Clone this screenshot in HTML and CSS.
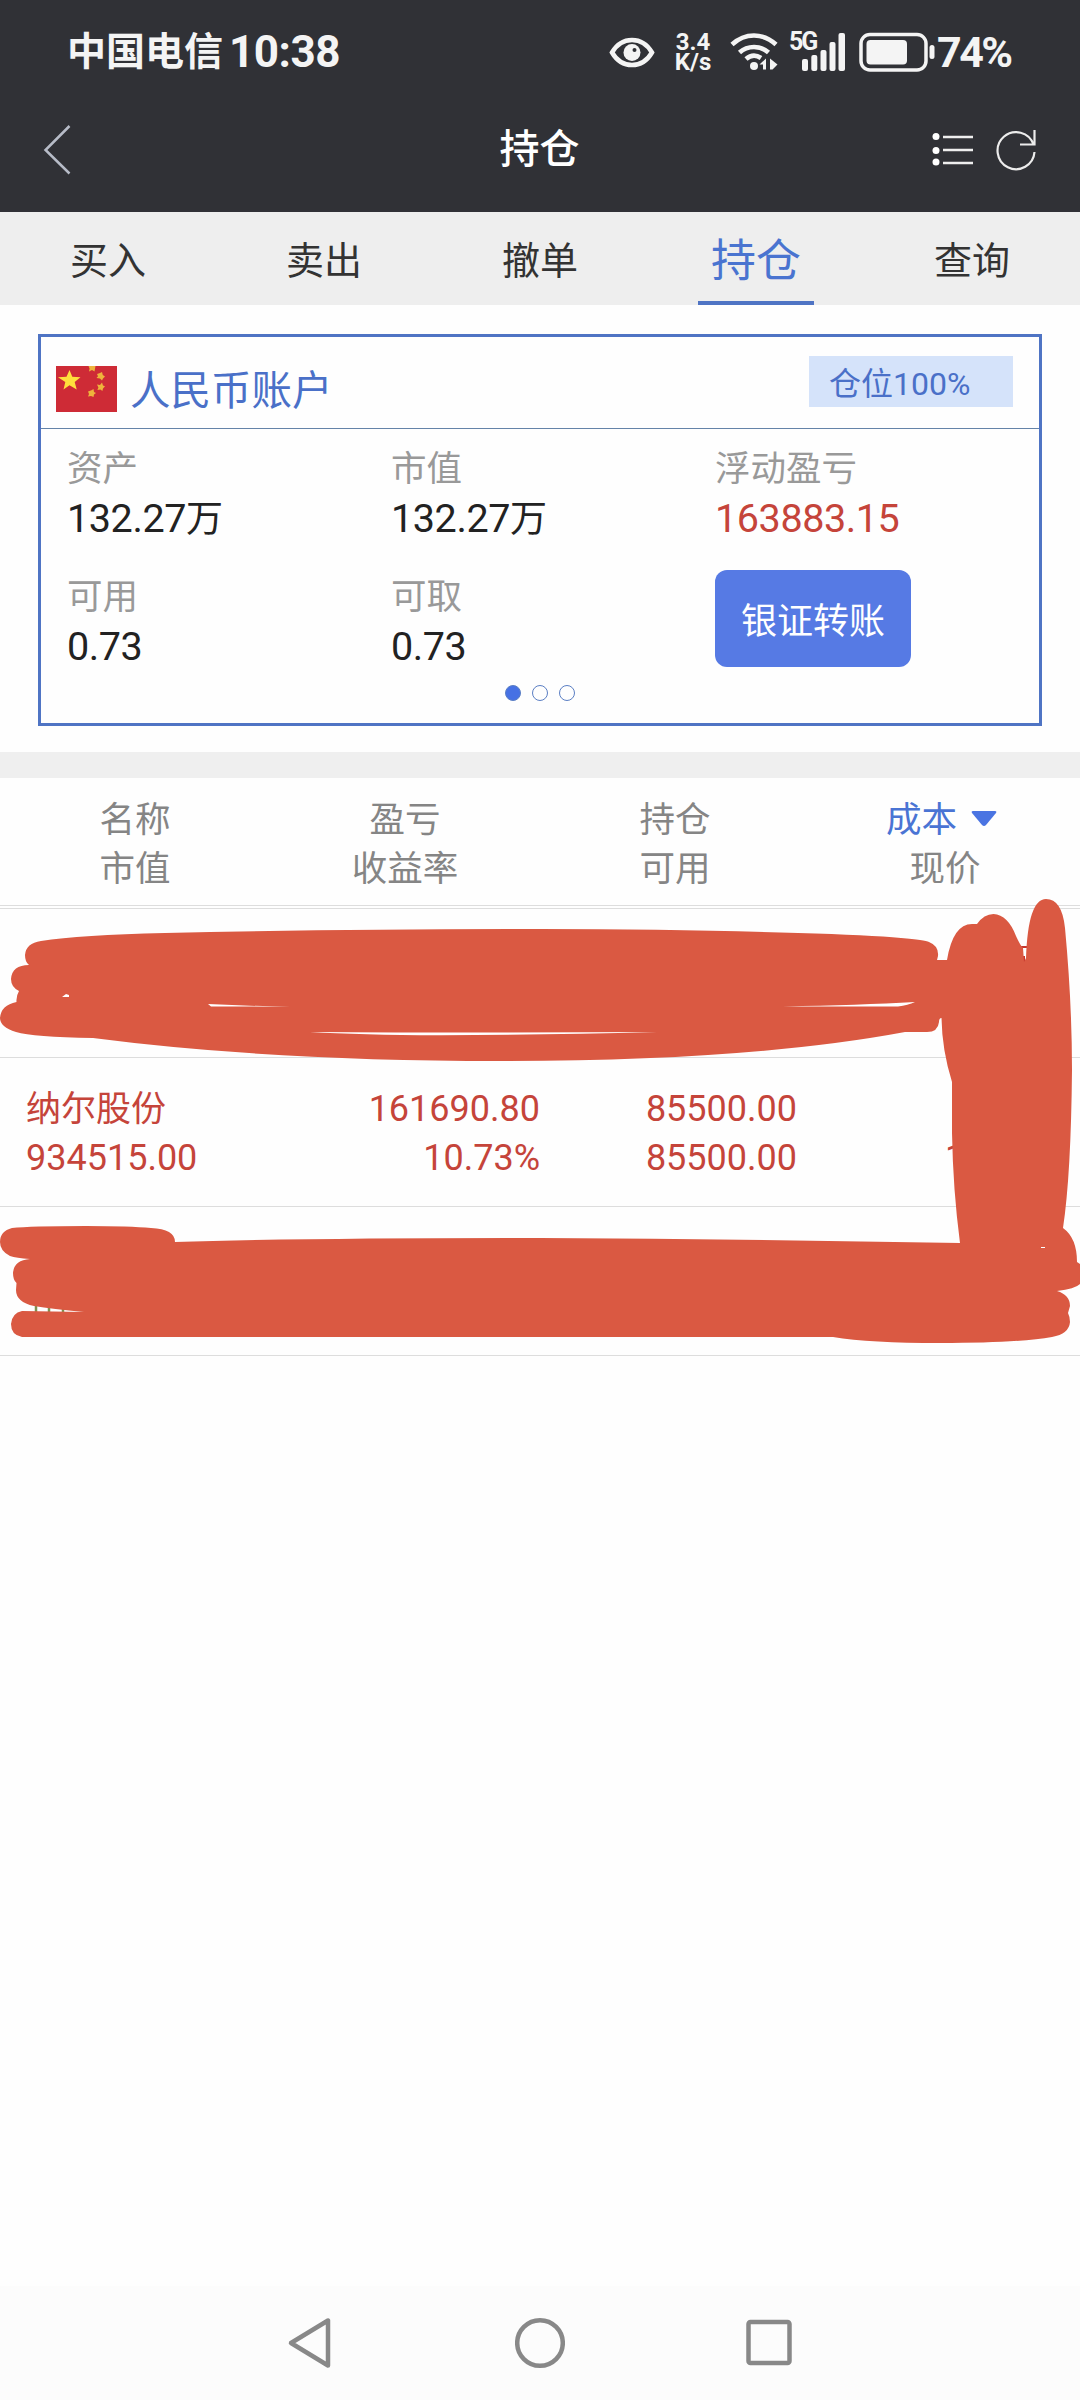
FILE: index.html
```html
<!DOCTYPE html>
<html lang="zh-CN">
<head>
<meta charset="utf-8">
<title>持仓</title>
<link rel="stylesheet" href="styles.css">
</head>
<body>
<header class="top">
  <div class="status">
    <div class="carrier"><span class="operator">中国电信</span><span class="clock">10:38</span></div>
    <div class="indicators">
      <svg class="eye" width="46" height="40" viewBox="0 0 46 40"><path d="M3 20.500C8 12 15 8 23 8s15 4 20 12.500C38 29 31 33 23 33S8 29 3 20.500Z" fill="none" stroke="#f4f4f4" stroke-width="4.500"/><circle cx="23" cy="20.500" r="8.500" fill="#f4f4f4"/><circle cx="25.500" cy="18" r="2" fill="#303136"/></svg>
      <div class="speed"><span>3.4</span><span>K/s</span></div>
      <svg class="wifi" width="48" height="40" viewBox="0 0 48 40" fill="none" stroke="#f4f4f4" stroke-width="4.600"><path d="M2 12.500C15 .5 33 .5 46 12.500M9.500 20.500c8-7.300 21-7.300 29 0M16 27c4.500-4 10-4.500 15-1" /><circle cx="24" cy="34" r="4" fill="#f4f4f4" stroke="none"/><path d="M36 26.500V37.500h-3v-5h-3.500ZM40 26.500l7.500 6-5 5H40Z" fill="#f4f4f4" stroke="none"/></svg>
      <div class="cell"><span class="net">5G</span><svg width="56" height="40" viewBox="0 0 56 40" fill="#f4f4f4"><rect x="13" y="27" width="6" height="12" rx="2"/><rect x="22.300" y="23" width="6" height="16" rx="2"/><rect x="31.500" y="18" width="6" height="21" rx="2"/><rect x="40.500" y="10" width="6" height="29" rx="2"/><rect x="49.500" y="1" width="6.500" height="38" rx="2"/></svg></div>
      <svg class="battery" width="78" height="40" viewBox="0 0 78 40"><rect x="2" y="2.500" width="65" height="35.500" rx="9" fill="none" stroke="#f4f4f4" stroke-width="3.500"/><rect x="7.500" y="8" width="40.500" height="24.500" rx="4" fill="#f4f4f4"/><rect x="70.500" y="13" width="5" height="14" rx="2.500" fill="#f4f4f4"/></svg>
      <span class="percent">74%</span>
    </div>
  </div>
  <div class="titlebar">
    <svg width="60" height="56" viewBox="0 0 60 56"><path d="M34.500 4 10.500 28l24 23.500" fill="none" stroke="#b7bcc8" stroke-width="2.500"/></svg>
    <h1>持仓</h1>
    <div class="actions">
      <svg width="42" height="40" viewBox="0 0 42 40"><g fill="#fff"><circle cx="4" cy="6.500" r="3.500"/><circle cx="4" cy="20.500" r="3.500"/><circle cx="4" cy="32" r="3.500"/></g><path d="M11 7h30M11 20h30M11 33h30" stroke="#eee" stroke-width="2.500"/></svg>
      <svg width="42" height="44" viewBox="0 0 42 44" fill="none" stroke="#ececec" stroke-width="2.200"><path d="M38.500 16.500A18.500 18.500 0 1 0 39.500 24M39.500 2v14.500H25"/></svg>
    </div>
  </div>
</header>
<nav class="tabs">
  <span>买入</span><span>卖出</span><span>撤单</span><span class="active"><b>持仓</b></span><span>查询</span>
</nav>
<main>
  <section class="account">
    <div class="card">
      <div class="card-head">
        <svg width="61" height="46" viewBox="0 0 61 46"><path fill="#ce2b36" d="M0 0h61v46H0z"/><path fill="#ffdf3c" d="m13.500 4 2.800 6.700 8.200.6-5.800 4.700 2 7.500-7.200-4.300-6 4.300 1.800-7.500L2 11.300l8.500-.6Z"/><g fill="#eeb43c"><path d="M32.500 0h7l-1 5.500-2.500-1.500-3 1.500.6-3Z"/><path d="m41 8 3-1 2-1 .8 3 2.200 1.500-2 2-1 2-2-2-3.500-.5 1.500-1.700Z"/><path d="m41 18.500 3 .5 2-2.500 1 3 2 .7-2 2.300-.6 2.500-2-1.600-3 .6 1-2.500Z"/><path d="m32 25.500 3.500-1.200 2-1.300.5 3 2 1-2 1.500-.5 2.500-2.500-1-3 .6 1-2.700Z"/></g></svg>
        <h2>人民币账户</h2>
        <span class="badge">仓位100%</span>
      </div>
      <div class="stats">
        <div class="stat"><span class="label">资产</span><span class="value">132.27<em>万</em></span></div>
        <div class="stat"><span class="label">市值</span><span class="value">132.27<em>万</em></span></div>
        <div class="stat"><span class="label">浮动盈亏</span><span class="value gain">163883.15</span></div>
        <div class="stat"><span class="label">可用</span><span class="value">0.73</span></div>
        <div class="stat"><span class="label">可取</span><span class="value">0.73</span></div>
        <button class="transfer">银证转账</button>
      </div>
      <div class="pager"><i class="on"></i><i></i><i></i></div>
    </div>
  </section>
  <section class="holdings">
    <div class="head">
      <div><span>名称</span><span>市值</span></div>
      <div><span>盈亏</span><span>收益率</span></div>
      <div><span>持仓</span><span>可用</span></div>
      <div><span class="sorted">成本<svg width="26" height="16" viewBox="0 0 26 16"><path d="M2 0h22q2 0 1 2L15 14q-2 2-4 0L1 2Q0 0 2 0Z" fill="#4a74e2"/></svg></span><span>现价</span></div>
    </div>
    <div class="row"></div>
    <div class="row">
      <div><span class="name">纳尔股份</span><span>934515.00</span></div>
      <div><span>161690.80</span><span>10.73%</span></div>
      <div><span>85500.00</span><span>85500.00</span></div>
      <div class="price"><span></span><span>1</span></div>
    </div>
    <div class="row"></div>
    <svg class="marker" width="1080" height="470" viewBox="0 890 1080 470">
      <path d="M36 1304v9M49 1305v8M63 1307v6" stroke="#7d9250" stroke-width="2.500"/>
      <path d="M1020 947h8M1024 956v8" stroke="#c5372e" stroke-width="2"/>
      <path fill="#da5942" d="M29 965Q25 962 25 955Q26 943 41 941Q80 935 165 933Q344 929 540 929Q680 929 798 933Q870 935 901 938Q925 940 929 942Q939 946 938 956L937 960L947 960Q953 924 972 924L977 924Q984 914 993.500 914Q1008 915 1016 936Q1020 945 1023 948L1024 962L1026 958Q1028 899 1046 899Q1062 899 1065 928Q1072 1003 1072 1070Q1071 1175 1063 1228Q1077 1238 1077 1262L1080 1264V1284Q1075 1289 1057 1291Q1070 1295 1070 1306L1068 1313Q1070 1317 1070 1322Q1069 1334 1052 1337Q1018 1343 940 1343Q870 1343 833 1337H540L22 1337Q11 1335 11 1324Q12 1313 22 1311L84 1312Q52 1309 34 1306Q16 1302 16 1290L16.500 1283Q13 1280 13 1273Q14 1260 30 1259Q16 1258 10 1256Q0 1251 0 1242Q0 1231 12 1228Q30 1226 86 1226Q130 1226 151 1228Q175 1229 175 1242Q300 1238 540 1238Q750 1239 960 1243Q953 1190 952 1133L952 1082Q942 1050 941.500 1018Q939 1018 939 1022Q938 1032 927 1032L905 1032Q750 1061 500 1061Q270 1061 93 1038Q33 1037 16 1032Q0 1027 0 1018Q1 1005 16.500 1002Q16 996 19 991Q11 987 11 979Q12 965 29 965Z"/>
      <path fill="#fff" d="M208 1004Q250 1006 290 1006.700L211 1006.500ZM310 1032Q480 1033 657 1032Q540 1035 440 1035.300Q360 1035 310 1032ZM783 1006.500Q860 1005 915 1002Q908 1005 898 1006.500ZM62 997l4-3 3 1v2ZM1041 1247h4v1h-4Z"/>
    </svg>
  </section>
</main>
<footer class="sysnav">
  <svg width="50" height="54" viewBox="0 0 50 54"><path d="M43 4.500v45L6 27Z"/></svg>
  <svg width="50" height="54" viewBox="0 0 50 54"><circle cx="25" cy="27" r="22.800"/></svg>
  <svg width="50" height="54" viewBox="0 0 50 54"><rect x="3.500" y="6" width="41" height="41" rx="2"/></svg>
</footer>
</body>
</html>
```
FILE: styles.css
```css
* { box-sizing: border-box; }
body {
  margin: 0;
  width: 1080px;
  height: 2400px;
  display: flex;
  flex-direction: column;
  background: #fefefe;
  color: #222;
  font-family: Roboto, "Noto Sans CJK SC", sans-serif;
}
h1, h2 { margin: 0; font-weight: 400; }
svg { display: block; flex: none; }

.top { height: 212px; background: #303136; color: #f4f4f4; }
.status {
  height: 100px;
  padding: 4px 67px 0 67px;
  display: flex;
  align-items: center;
  justify-content: space-between;
}
.carrier { display: flex; gap: 6px; line-height: 48px; font-weight: 700; }
.operator { font-size: 39px; font-weight: 700; }
.clock { font-size: 44px; letter-spacing: -.5px; }
.indicators { display: flex; align-items: center; }
.speed {
  width: 40px;
  margin-left: 18px;
  display: flex;
  flex-direction: column;
  font-size: 24px;
  line-height: 20px;
  font-weight: 700;
  text-align: center;
}
.wifi { margin-left: 17px; }
.cell { display: flex; margin-left: 11px; }
.net { width: 0; font-size: 25px; font-weight: 700; line-height: 20px; letter-spacing: -2px; }
.battery { margin-left: 14px; }
.percent { font-size: 43px; line-height: 48px; font-weight: 700; width: 76px; letter-spacing: -2.500px; }

.titlebar {
  height: 102px;
  padding: 0 43px 2px 35px;
  display: grid;
  grid-template-columns: 1fr auto 1fr;
  align-items: center;
}
h1 { font-size: 40px; line-height: 56px; font-weight: 500; color: #fff; padding-left: 7px; }
.actions { display: flex; align-items: center; justify-content: flex-end; gap: 21px; }

.tabs {
  height: 93px;
  background: #eee;
  display: grid;
  grid-template-columns: repeat(5, 1fr);
  font-size: 38px;
  line-height: 99px;
  text-align: center;
  color: #333;
}
.active { display: flex; justify-content: center; font-size: 45px; color: #4a74d0; }
.active b { width: 116px; height: 93px; font-weight: 400; border-bottom: 4px solid #4f74c4; }

main { flex: 1; }
.account { padding: 29px 38px 26px; border-bottom: 26px solid #efefef; }
.card { height: 392px; border: 3px solid #4f74c4; }
.card-head {
  height: 92px;
  padding: 0 26px 0 15px;
  display: flex;
  align-items: center;
  border-bottom: 1px solid #6483a8;
}
.card-head svg { margin-top: 12px; }
h2 { flex: 1; margin: 16px 0 0 13px; font-size: 40.500px; line-height: 50px; color: #4a70c8; }
.badge {
  width: 204px;
  height: 51px;
  margin-bottom: 2px;
  padding-left: 20px;
  background: #d5e3fa;
  color: #4a70c8;
  font-size: 32px;
  line-height: 56px;
}
.stats {
  display: grid;
  grid-template-columns: repeat(3, 324px);
  grid-template-rows: 128px 125px;
  padding: 15px 0 0 26px;
}
.stat { display: flex; flex-direction: column; }
.label { font-size: 35.500px; line-height: 50px; color: #999; }
.value { font-size: 39.500px; line-height: 50px; letter-spacing: -.4px; }
.value em { font-style: normal; font-size: 37px; }
.gain { color: #c5443a; }
.transfer {
  width: 196px;
  height: 97px;
  margin: -2px 0 0;
  padding: 7px 0 0;
  border: 0;
  border-radius: 12px;
  background: #567ae4;
  color: #fff;
  font: 36px/50px Roboto, "Noto Sans CJK SC", sans-serif;
}
.pager { display: flex; justify-content: center; gap: 11px; margin-top: -12px; }
.pager i { width: 16px; height: 16px; border: 1px solid #5b7fc4; border-radius: 50%; }
.pager .on { background: #4671e4; }

.holdings { position: relative; }
.head {
  height: 131px;
  padding-top: 18px;
  display: grid;
  grid-template-columns: repeat(4, 1fr);
  border-bottom: 1px solid #ddd;
  box-shadow: inset 0 -2px #fefefe, inset 0 -3px #ddd;
  font-size: 35.500px;
  line-height: 49px;
  color: #858585;
  text-align: center;
}
.head div { display: flex; flex-direction: column; }
.sorted { display: flex; justify-content: center; align-items: center; gap: 14px; color: #4a74d4; padding-right: 7px; }
.sorted svg { margin-bottom: 4px; }
.row {
  height: 149px;
  padding: 27px 26px 0;
  display: grid;
  grid-template-columns: repeat(4, 257px);
  border-bottom: 1px solid #ddd;
  font-size: 36px;
  line-height: 49px;
  color: #c5443a;
  text-align: right;
}
.row div { display: flex; flex-direction: column; }
.row div:first-child { text-align: left; }
.row span { min-height: 49px; }
.row .name { font-size: 35px; }
.row .price { text-align: left; padding-left: 148px; }
.marker { position: absolute; left: 0; top: 112px; }

.sysnav {
  flex: none;
  height: 114px;
  background: #fcfcfc;
  display: flex;
  justify-content: center;
  align-items: center;
  gap: 180px;
}
.sysnav svg { fill: none; stroke: #888; stroke-width: 4.500; stroke-linejoin: round; }
```
